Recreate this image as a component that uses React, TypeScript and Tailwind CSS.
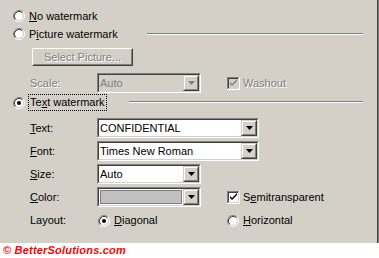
import React from 'react';

const font = "font-['Liberation_Sans',Arial,sans-serif] text-[11px] leading-[13px]";

const Radio: React.FC<{ checked?: boolean }> = ({ checked }) => (
  <svg width="12" height="12" viewBox="0 0 12 12" className="shrink-0">
    <circle cx="6" cy="6" r="4.5" fill="#ffffff" />
    <path d="M2.11 9.89 A5.5 5.5 0 0 1 9.89 2.11" fill="none" stroke="#808080" strokeWidth="1" />
    <path d="M9.89 2.11 A5.5 5.5 0 0 1 2.11 9.89" fill="none" stroke="#ffffff" strokeWidth="1" />
    <path d="M2.82 9.18 A4.5 4.5 0 0 1 9.18 2.82" fill="none" stroke="#404040" strokeWidth="1" />
    <path d="M9.18 2.82 A4.5 4.5 0 0 1 2.82 9.18" fill="none" stroke="#d4d0c8" strokeWidth="1" />
    {checked && <circle cx="6" cy="6" r="2" fill="#000000" />}
  </svg>
);

const Check: React.FC<{ disabled?: boolean }> = ({ disabled }) => (
  <svg width="13" height="13" viewBox="0 0 13 13" className="shrink-0">
    <rect x="0" y="0" width="13" height="13" fill="#ffffff" />
    <rect x="1" y="1" width="11" height="11" fill="#d4d0c8" />
    <rect x="0" y="0" width="12" height="1" fill="#808080" />
    <rect x="0" y="0" width="1" height="12" fill="#808080" />
    <rect x="1" y="1" width="10" height="1" fill="#404040" />
    <rect x="1" y="1" width="1" height="10" fill="#404040" />
    <rect x="2" y="2" width="9" height="9" fill={disabled ? '#d4d0c8' : '#ffffff'} />
    <path d="M3 5 L3 7 L5 9 L10 4 L10 2 L5 7 Z" fill={disabled ? '#808080' : '#000000'} />
  </svg>
);

const Arrow: React.FC<{ disabled?: boolean }> = ({ disabled }) => (
  <div className="w-[16px] h-[16px] shrink-0 bg-[#d4d0c8] border border-t-[#d4d0c8] border-l-[#d4d0c8] border-r-[#404040] border-b-[#404040]">
    <div className="w-full h-full border border-t-white border-l-white border-r-[#808080] border-b-[#808080] flex items-center justify-center">
      <svg width="7" height="4" viewBox="0 0 7 4">
        <path d="M0 0 H7 L3.5 4 Z" fill={disabled ? '#808080' : '#000000'} />
      </svg>
    </div>
  </div>
);

const Combo: React.FC<{ w: number; value?: string; disabled?: boolean; swatch?: boolean }> = ({ w, value, disabled, swatch }) => (
  <div
    className="h-[20px] border border-t-[#808080] border-l-[#808080] border-r-white border-b-white"
    style={{ width: w }}
  >
    <div className={`h-full flex items-center border border-t-[#404040] border-l-[#404040] border-r-[#d4d0c8] border-b-[#d4d0c8] ${disabled ? 'bg-[#d4d0c8]' : 'bg-white'}`}>
      {swatch ? (
        <div className="flex-1 h-full p-[1px]">
          <div className="h-full bg-[#c0c0c0] border border-[#808080]" />
        </div>
      ) : (
        <span className={`flex-1 pl-[1px] ${disabled ? 'text-[#808080]' : 'text-black'}`}>{value}</span>
      )}
      <Arrow disabled={disabled} />
    </div>
  </div>
);

const U: React.FC<{ children: React.ReactNode }> = ({ children }) => <span className="underline underline-offset-[1px]">{children}</span>;

const Sep: React.FC = () => (
  <div className="flex-1 mr-[16px] h-[2px] border-t border-t-[#808080] border-b border-b-white" />
);

export default function App() {
  return (
    <div className={`w-[379px] h-[258px] bg-white flex flex-col ${font}`}>
      <div className="h-[243px] bg-[#d4d0c8] shadow-[inset_-1px_0_0_#808080,inset_-2px_0_0_#404040] flex flex-col pl-[13px] pt-[10px] text-black">
        <div className="h-[12px] flex items-center gap-[4px]">
          <Radio />
          <span><U>N</U>o watermark</span>
        </div>

        <div className="mt-[6px] h-[12px] flex items-center">
          <Radio />
          <span className="ml-[4px]">P<U>i</U>cture watermark</span>
          <div className="ml-[29px] flex-1 flex"><Sep /></div>
        </div>

        <div className="mt-[8px] ml-[19px] w-[101px] h-[18px] bg-[#d4d0c8] border border-t-white border-l-white border-r-[#404040] border-b-[#404040]">
          <div className="w-full h-full border border-transparent border-r-[#808080] border-b-[#808080] flex items-center justify-center text-[#808080] [text-shadow:1px_1px_0_#ffffff]">
            Select Picture...
          </div>
        </div>

        <div className="mt-[7px] h-[20px] flex items-center">
          <span className="w-[84px] pl-[17px] text-[#808080] [text-shadow:1px_1px_0_#ffffff]">Scale:</span>
          <Combo w={104} value="Auto" disabled />
          <div className="ml-[26px] flex items-center gap-[3px]">
            <Check disabled />
            <span className="text-[#808080] [text-shadow:1px_1px_0_#ffffff]">Washout</span>
          </div>
        </div>

        <div className="mt-[1px] h-[17px] flex items-center">
          <Radio checked />
          <span className="ml-[3px] px-[1px] h-[17px] flex items-center border border-dotted border-black">Te<U>x</U>t watermark</span>
          <div className="ml-[22px] flex-1 flex -mt-[2px]"><Sep /></div>
        </div>

        <div className="mt-[7px] h-[20px] flex items-center">
          <span className="w-[84px] pl-[17px]"><U>T</U>ext:</span>
          <Combo w={162} value="CONFIDENTIAL" />
        </div>
        <div className="mt-[3px] h-[20px] flex items-center">
          <span className="w-[84px] pl-[17px]"><U>F</U>ont:</span>
          <Combo w={162} value="Times New Roman" />
        </div>
        <div className="mt-[3px] h-[20px] flex items-center">
          <span className="w-[84px] pl-[17px]"><U>S</U>ize:</span>
          <Combo w={104} value="Auto" />
        </div>
        <div className="mt-[3px] h-[20px] flex items-center">
          <span className="w-[84px] pl-[17px]"><U>C</U>olor:</span>
          <Combo w={104} swatch />
          <div className="ml-[26px] flex items-center gap-[3px]">
            <Check />
            <span>S<U>e</U>mitransparent</span>
          </div>
        </div>

        <div className="mt-[7px] h-[13px] flex items-center">
          <span className="w-[85px] pl-[17px]">Layout:</span>
          <div className="w-[129px] flex items-center gap-[4px]">
            <Radio checked />
            <span><U>D</U>iagonal</span>
          </div>
          <div className="flex items-center gap-[4px]">
            <Radio />
            <span><U>H</U>orizontal</span>
          </div>
        </div>
      </div>
      <div className="h-[15px] pl-[3px] flex items-center text-[#ff0000] italic font-bold text-[11px] tracking-[0.2px]">
        © BetterSolutions.com
      </div>
    </div>
  );
}
